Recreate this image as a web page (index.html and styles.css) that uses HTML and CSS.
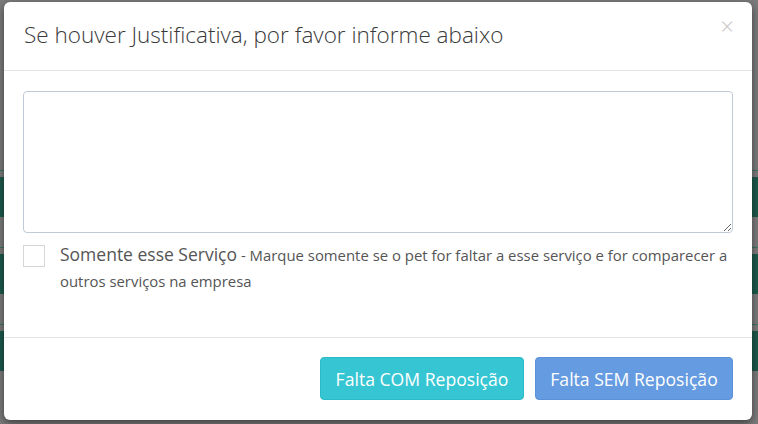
FILE: index.html
```html
<!DOCTYPE html>
<html lang="pt-BR">
<head>
    <meta charset="UTF-8">
    <title>Justificativa</title>
    <link rel="stylesheet" href="styles.css">
</head>
<body>
    <!-- tabela por tras do modal -->
    <div class="backdrop">
        <div class="row"><div class="line"></div><div class="band"></div></div>
        <div class="row"><div class="line"></div><div class="band"></div></div>
        <div class="row"><div class="line"></div><div class="band"></div></div>
    </div>

    <div class="modal">
        <div class="modal-header">
            <h4 class="modal-title">Se houver Justificativa, por favor informe abaixo</h4>
            <span class="close">&times;</span>
        </div>
        <div class="modal-body">
            <textarea class="form-control"></textarea>
            <label class="check">
                <span class="box"></span>
                <span class="check-text"><span class="big">Somente esse Serviço</span> - Marque somente se o pet for faltar a esse serviço e for comparecer a outros serviços na empresa</span>
            </label>
        </div>
        <div class="modal-footer">
            <button class="btn btn-info">Falta COM Reposição</button>
            <button class="btn btn-primary">Falta SEM Reposição</button>
        </div>
    </div>
</body>
</html>
```

FILE: styles.css
```css
html, body {
    margin: 0;
    height: 100%;
}
body {
    background: #7b7b7b;
    font-family: "Open Sans", "Liberation Sans", sans-serif;
    overflow: hidden;
    position: relative;
}

/*fundo*/
.backdrop {
    padding-top: 170px;
}
.row {
    height: 77px;
}
.line {
    height: 1px;
    background: #3b7565;
}
.band {
    margin-top: 6px;
    height: 40px;
    background: #1d5a4c;
}

/*modal*/
.modal {
    position: absolute;
    left: 4px;
    top: 2px;
    width: 748px;
    height: 418px;
    background: #fff;
    border-radius: 6px;
    box-shadow: 0 3px 9px rgba(0,0,0,.5);
    display: flex;
    flex-direction: column;
}
.modal-header {
    border-bottom: 1px solid #e5e5e5;
    display: flex;
    align-items: center;
    justify-content: space-between;
    padding: 0 18px 0 20px;
    box-sizing: border-box;
    height: 69px;
}
.modal-title {
    margin: 0;
    font-size: 22.5px;
    font-weight: 300;
    color: #3a3a3a;
    padding-bottom: 4px;
}
.close {
    font-size: 24px;
    line-height: 1;
    color: #c8c8c8;
    font-weight: 300;
    align-self: flex-start;
    margin-top: 12px;
    font-family: "Open Sans", sans-serif;
}
.modal-body {
    padding: 20px 19px 0 19px;
    flex: 1;
}
.form-control {
    display: block;
    box-sizing: border-box;
    width: 100%;
    height: 142px;
    border: 1px solid #c2cad8;
    border-radius: 4px;
    margin: 0;
    resize: vertical;
    font-family: inherit;
}
.check {
    display: flex;
    margin-top: 11px;
    color: #555;
}
.box {
    flex: none;
    width: 20px;
    height: 20px;
    border: 1px solid #d6d6d6;
    margin-right: 15px;
    margin-top: 1px;
}
.check-text {
    font-size: 14.9px;
    line-height: 26px;
    margin-top: -3px;
}
.big {
    font-size: 17.5px;
}
.modal-footer {
    border-top: 1px solid #e5e5e5;
    padding: 19px 19px 20px;
    display: flex;
    justify-content: flex-end;
    gap: 11px;
}
.btn {
    height: 43px;
    border: 1px solid transparent;
    border-radius: 4px;
    color: #fff;
    font-family: inherit;
    font-size: 17.6px;
    padding: 0 10px;
}
.btn-info {
    background: #36c6d3;
    border-color: #2bbbc8;
    width: 204px;
}
.btn-primary {
    background: #659be0;
    border-color: #5a91d8;
    width: 198px;
}
```
